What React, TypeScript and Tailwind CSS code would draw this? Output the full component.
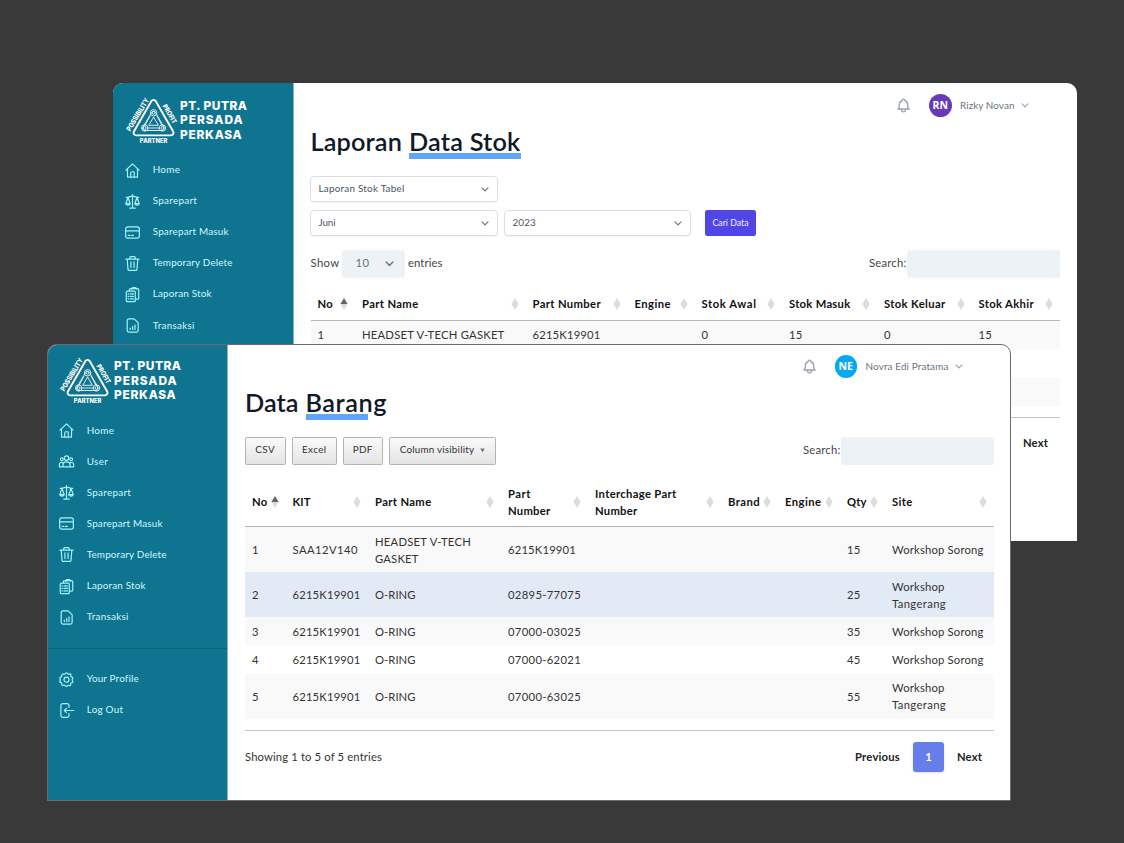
import { useLayoutEffect, useRef, useState, type ReactNode } from "react";

/* Text run whose letter spacing is adjusted so that it fills a given width. */
function Fit({ w, children, className = "" }: { w: number; children: string; className?: string }) {
  const ref = useRef<HTMLSpanElement>(null);
  const [spacing, setSpacing] = useState<number | null>(null);
  useLayoutEffect(() => {
    const el = ref.current;
    if (!el) return;
    el.style.letterSpacing = "0px";
    const natural = el.getBoundingClientRect().width;
    const next = (w - natural) / children.length;
    el.style.letterSpacing = `${next}px`;
    setSpacing(next);
  }, [w, children]);
  return (
    <span ref={ref} className={`inline-block whitespace-pre ${className}`} style={{ letterSpacing: `${spacing ?? 0}px` }}>
      {children}
    </span>
  );
}

type IconName = "home" | "users" | "scale" | "card" | "trash" | "clipboard" | "report" | "gear" | "logout";

const shapes: Record<IconName, ReactNode> = {
  home: (
    <>
      <path d="M1.500 11.500 12 1.500l10.500 10M4 9.500V22.500h16V9.500" />
      <path d="M9.200 22v-6.500a1.500 1.500 0 0 1 1.500-1.500h2.600a1.500 1.500 0 0 1 1.500 1.500V22" />
    </>
  ),
  users: (
    <>
      <circle cx="12" cy="6.500" r="3.600" />
      <circle cx="4.500" cy="8.500" r="2.300" />
      <circle cx="19.500" cy="8.500" r="2.300" />
      <path d="M6.500 20.500v-3.500a5.500 4.500 0 0 1 11 0v3.500zM6.500 20.500H.5v-3.500a3.500 3.500 0 0 1 6-2.500M17.500 20.500h6v-3.500a3.500 3.500 0 0 0-6-2.500" />
    </>
  ),
  scale: (
    <>
      <path d="M12 1v21M7.500 22.500h9M2 5.500c4 0 6-2 10-2s6 2 10 2" />
      <path d="M4.800 5.500 1.200 15.500c1 3 6.200 3 7.200 0zM19.200 5.500l-3.600 10c1 3 6.200 3 7.200 0zM1.200 15.500h7.200M15.600 15.500h7.200" />
    </>
  ),
  card: (
    <>
      <rect x="1" y="3" width="22" height="18" rx="3.500" />
      <path d="M1 9.500h22M5 16.500h3M10.500 16.500h3" />
    </>
  ),
  trash: (
    <>
      <path d="M1.500 5h21M3.500 5l1.300 16a2 2 0 0 0 2 2h10.400a2 2 0 0 0 2-2L20.500 5M7.500 5V3a2 2 0 0 1 2-2h5a2 2 0 0 1 2 2v2" />
      <path d="M9.500 9.500v9M14.500 9.500v9" />
    </>
  ),
  clipboard: (
    <>
      <rect x="2" y="6.500" width="14.500" height="17" rx="2" />
      <path d="M7 6V4.500a2 2 0 0 1 2-2h11a2 2 0 0 1 2 2v13a2 2 0 0 1-2 2h-3M11 4V2.500A1.500 1.500 0 0 1 12.500 1h4A1.500 1.500 0 0 1 18 2.500V4" />
      <path d="M5 11h1M8.500 11h5M5 15h1M8.500 15h5M5 19h1M8.500 19h5" />
    </>
  ),
  report: (
    <>
      <path d="M6 1.500h8.500L21 7.500V20a2.500 2.500 0 0 1-2.500 2.500H6A2.500 2.500 0 0 1 3.500 20V4A2.500 2.500 0 0 1 6 1.500z" />
      <path d="M8.500 18.500v-2.500M12.300 18.500v-5M16 18.500V11" />
    </>
  ),
  gear: (
    <>
      <path d="M12 1.200c1.500 0 1.700 2 2.700 2.400s2.600-1.300 3.800-.3.100 2.700.6 3.700 2.700.9 3.100 2.300-1.300 2.200-1.300 3.200 1.700 1.900 1.200 3.400-2.500 1.200-3.200 2.100.3 2.800-1 3.600-2.500-.7-3.600-.4-1.300 1.900-2.800 1.900-1.700-1.700-2.700-2-2.500 1.100-3.700.3-.2-2.700-.8-3.600-2.700-.8-3.100-2.200 1.200-2.100 1.200-3.100S.8 10.700 1.200 9.300s2.500-1.300 3.100-2.200-.4-2.800.8-3.700 2.600.7 3.700.3 1.700-2.500 3.200-2.500z" />
      <circle cx="12" cy="12.200" r="4" />
    </>
  ),
  logout: (
    <>
      <path d="M16 7V4a3 3 0 0 0-3-3H6a3 3 0 0 0-3 3v16a3 3 0 0 0 3 3h7a3 3 0 0 0 3-3v-3" />
      <path d="M23.500 12H8.500M12 8.500 8.500 12l3.500 3.500" />
    </>
  ),
};

function NavIcon({ name }: { name: IconName }) {
  return (
    <svg viewBox="0 0 24 24" className="h-[15px] w-[15px] shrink-0 overflow-visible" fill="none" stroke="#a5f3fc" strokeWidth="1.900" strokeLinecap="round" strokeLinejoin="round">
      {shapes[name]}
    </svg>
  );
}

function NavItem({ icon, label, w }: { icon: IconName; label: string; w: number }) {
  return (
    <li className="flex h-[31.1px] items-center gap-[12.800px] pl-[11.900px] text-[9.9px] text-cyan-100">
      <NavIcon name={icon} />
      <Fit w={w} className="pb-[1px]">{label}</Fit>
    </li>
  );
}

const knot = "M24.600 15.500a2.300 2.300 0 0 1 4 0L36.800 30a2.300 2.300 0 0 1-2 3.500H18a2.300 2.300 0 0 1-2-3.500z";

function Brand() {
  return (
    <div className="flex h-[48px] items-center gap-[3.500px] pl-[13.500px]">
      <svg viewBox="0 0 50 48" className="h-[48px] w-[50px] overflow-visible" fill="none" stroke="#fff">
        <path d="M24.300 4.200a2.600 2.600 0 0 1 4.500 0L46.200 34.500a2.600 2.600 0 0 1-2.300 3.900H9.200a2.600 2.600 0 0 1-2.300-3.900z" strokeWidth="1.900" />
        <g strokeWidth=".85">
          <path d={knot} />
          <path d="M23 19 18 28.500M30 19l5 9.500M20.500 31h12" />
          <circle cx="26.600" cy="15.800" r="3.200" />
          <circle cx="26.600" cy="15.800" r="1.400" />
          <circle cx="17.700" cy="31" r="3.200" />
          <circle cx="17.700" cy="31" r="1.400" />
          <circle cx="35.500" cy="31" r="3.200" />
          <circle cx="35.500" cy="31" r="1.400" />
          <path d="m26.600 20 4.800 8.300h-9.600z" />
        </g>
        <g fill="#fff" stroke="none" fontFamily="Inter, sans-serif" fontWeight="800" textAnchor="middle">
          <text transform="translate(12.800 18.800) rotate(-59)" fontSize="7" textLength="37" lengthAdjust="spacingAndGlyphs">POSSIBILITY</text>
          <text transform="translate(40.600 18.100) rotate(60)" fontSize="6.800" textLength="21" lengthAdjust="spacingAndGlyphs">PROFIT</text>
          <text x="26.600" y="45.600" fontSize="5.700" textLength="27.500" lengthAdjust="spacingAndGlyphs">PARTNER</text>
        </g>
      </svg>
      <div className="flex flex-col items-start font-[Inter] text-[11.900px] leading-[14.500px] font-extrabold text-white">
        <Fit w={67.5}>PT. PUTRA</Fit>
        <Fit w={63.5}>PERSADA</Fit>
        <Fit w={62.5}>PERKASA</Fit>
      </div>
    </div>
  );
}

function Chevron({ className }: { className: string }) {
  return (
    <svg viewBox="0 0 8 5" className={className} fill="none" stroke="currentColor" strokeWidth="1.200" strokeLinecap="round" strokeLinejoin="round">
      <path d="m1 .8 3 3 3-3" />
    </svg>
  );
}

function TopBar({ initials, name, w, color, height }: { initials: string; name: string; w: number; color: string; height: string }) {
  return (
    <div className={`flex items-center justify-end ${height}`}>
      <svg viewBox="0 0 24 24" className="h-[17px] w-[17px] text-[#9ca3af]" fill="none" stroke="currentColor" strokeWidth="1.900" strokeLinecap="round" strokeLinejoin="round">
        <path d="M15 17h5l-1.400-1.400A2 2 0 0 1 18 14.200V11a6 6 0 0 0-4-5.700V5a2 2 0 1 0-4 0v.3A6 6 0 0 0 6 11v3.200c0 .5-.2 1-.6 1.400L4 17h5m6 0v1a3 3 0 1 1-6 0v-1m6 0H9" />
      </svg>
      <span className={`ml-[17px] flex h-[22.500px] w-[22.500px] items-center justify-center rounded-full font-['Open_Sans'] text-[10.500px] font-bold text-white ${color}`}>
        {initials}
      </span>
      <span className="ml-[8.500px] flex items-center pb-[1px] text-[9.900px] text-[#6b7280]">
        <Fit w={w}>{name}</Fit>
      </span>
      <Chevron className="ml-[6px] h-[5px] w-[8px] text-[#9ca3af]" />
    </div>
  );
}

function SortIcon({ active }: { active?: boolean }) {
  return (
    <svg viewBox="0 0 8 12" className="mr-[7px] h-[12px] w-[8px] shrink-0">
      <path d="M.4 6 4 0l3.600 6z" fill={active ? "#666" : "#dcdcdc"} />
      <path d="M.4 6 4 12l3.600-6z" fill="#dcdcdc" />
    </svg>
  );
}

type Column = { lines: [string, number][]; width: string };

function HeaderRow({ columns, height }: { columns: Column[]; height: string }) {
  return (
    <div className={`flex border-b border-[#b5b5b5] ${height}`}>
      {columns.map((c, i) => (
        <div key={i} className={`flex shrink-0 items-center justify-between pl-[7px] ${c.width}`}>
          <div className="flex flex-col items-start text-[11.250px] leading-[17px] font-bold text-[#111]">
            {c.lines.map(([t, w]) => (
              <Fit key={t} w={w}>{t}</Fit>
            ))}
          </div>
          <SortIcon active={i === 0} />
        </div>
      ))}
    </div>
  );
}

function BodyRow({ columns, cells, className }: { columns: Column[]; cells: [string, number][][]; className: string }) {
  return (
    <div className={`flex text-[11.250px] leading-[17px] text-[#333] ${className}`}>
      {columns.map((c, i) => (
        <div key={i} className={`flex shrink-0 flex-col justify-center pl-[7px] ${c.width}`}>
          {(cells[i] ?? []).map(([t, w]) => (
            <Fit key={t} w={w} className="self-start">{t}</Fit>
          ))}
        </div>
      ))}
    </div>
  );
}

function Select({ label, w, className }: { label: string; w: number; className: string }) {
  return (
    <div className={`flex h-[26px] items-center justify-between rounded-[4px] border border-[#dcdee2] bg-white pr-[8px] pl-[7.500px] text-[9.900px] text-[#4b5563] shadow-[0_1px_1px_rgba(0,0,0,0.05)] ${className}`}>
      <Fit w={w} className="pb-[2px]">{label}</Fit>
      <Chevron className="h-[5px] w-[8px] text-[#6b7280]" />
    </div>
  );
}

function Search() {
  return (
    <div className="flex items-center text-[11.250px] text-[#444]">
      <Fit w={37.5}>Search:</Fit>
      <div className="h-[28px] w-[153.500px] rounded-[3px] bg-[#edf2f7]" />
    </div>
  );
}

function ToolButton({ label, w, className, caret }: { label: string; w: number; className: string; caret?: boolean }) {
  return (
    <div className={`flex h-[28px] items-center justify-center rounded-[1.500px] border border-[#b3b3b3] bg-linear-to-b from-[#fafafa] to-[#e4e4e4] text-[9.900px] text-[#333] ${className}`}>
      <Fit w={w} className="pb-[2px]">{label}</Fit>
      {caret && (
        <svg viewBox="0 0 6 5" className="ml-[6px] h-[5px] w-[5px]">
          <path d="M.3 0h5.400L3 5z" fill="#777" />
        </svg>
      )}
    </div>
  );
}

const stokColumns: Column[] = [
  { lines: [["No", 15.5]], width: "w-[44.500px]" },
  { lines: [["Part Name", 56.5]], width: "w-[170.500px]" },
  { lines: [["Part Number", 68.500]], width: "w-[102px]" },
  { lines: [["Engine", 36.500]], width: "w-[67px]" },
  { lines: [["Stok Awal", 55]], width: "w-[87.500px]" },
  { lines: [["Stok Masuk", 61.500]], width: "w-[95px]" },
  { lines: [["Stok Keluar", 61.500]], width: "w-[94.500px]" },
  { lines: [["Stok Akhir", 55.500]], width: "w-[88.500px]" },
];

const barangColumns: Column[] = [
  { lines: [["No", 15.5]], width: "w-[40.500px]" },
  { lines: [["KIT", 18]], width: "w-[82.500px]" },
  { lines: [["Part Name", 56.5]], width: "w-[133px]" },
  { lines: [["Part", 23], ["Number", 42.500]], width: "w-[87px]" },
  { lines: [["Interchage Part", 81.500], ["Number", 42.500]], width: "w-[133px]" },
  { lines: [["Brand", 32]], width: "w-[57px]" },
  { lines: [["Engine", 36.500]], width: "w-[62px]" },
  { lines: [["Qty", 19.500]], width: "w-[45px]" },
  { lines: [["Site", 20.500]], width: "w-[109px]" },
];

const sorong: [string, number][] = [["Workshop Sorong", 91.500]];
const tangerang: [string, number][] = [["Workshop", 52.500], ["Tangerang", 54]];
const oring: [string, number][] = [["O-RING", 40.500]];
const kit: [string, number][] = [["6215K19901", 68]];

function LaporanWindow() {
  return (
    <section className="absolute top-[83px] left-[113px] flex h-[458px] w-[964px] overflow-hidden rounded-t-[10px] bg-white">
      <aside className="w-[180.500px] shrink-0 border-r border-[#8ab5c1] bg-[#0f7490] pt-[13.500px]">
        <Brand />
        <ul className="mt-[10px]">
          <NavItem icon="home" label="Home" w={27.5} />
          <NavItem icon="scale" label="Sparepart" w={44.5} />
          <NavItem icon="card" label="Sparepart Masuk" w={76} />
          <NavItem icon="trash" label="Temporary Delete" w={80} />
          <NavItem icon="clipboard" label="Laporan Stok" w={59} />
          <NavItem icon="report" label="Transaksi" w={42} />
        </ul>
      </aside>
      <main className="flex flex-1 flex-col px-[17px]">
        <div className="pr-[31.500px]">
          <TopBar initials="RN" name="Rizky Novan" w={54.5} color="bg-[#673ab7]" height="h-[45px]" />
        </div>
        <h1 className="flex h-[28px] items-center gap-[7px] pb-[3px] text-[25.300px] leading-[28px] font-semibold text-[#111827]">
          <Fit w={91.5}>Laporan</Fit>
          <span className="relative">
            <span className="absolute inset-x-0 top-[26.500px] h-[5.500px] bg-[#60a5fa]" />
            <Fit w={111.5} className="relative">Data Stok</Fit>
          </span>
        </h1>
        <div className="mt-[20px] -ml-[0.500px] flex">
          <Select label="Laporan Stok Tabel" w={86} className="w-[188px]" />
        </div>
        <div className="mt-[8px] -ml-[0.500px] flex">
          <Select label="Juni" w={17} className="w-[188px]" />
          <Select label="2023" w={23.5} className="ml-[6px] w-[187px]" />
          <div className="ml-[14px] flex h-[26px] w-[51px] items-center justify-center rounded-[2.500px] bg-[#4f46e5] text-[8.700px] text-indigo-50">
            <Fit w={36}>Cari Data</Fit>
          </div>
        </div>
        <div className="mt-[13.500px] flex items-center justify-between text-[11.250px] text-[#444]">
          <div className="flex items-center">
            <Fit w={29}>Show</Fit>
            <div className="mr-[3.500px] ml-[2.500px] flex h-[28px] w-[62.500px] items-center justify-between rounded-[3px] bg-[#edf2f7] pr-[11px] pl-[13.500px] text-[#6b7280]">
              <Fit w={14}>10</Fit>
              <Chevron className="h-[6px] w-[9px]" />
            </div>
            <Fit w={34.5}>entries</Fit>
          </div>
          <Search />
        </div>
        <div className="mt-[10px]">
          <HeaderRow columns={stokColumns} height="h-[33.500px]" />
          <BodyRow
            columns={stokColumns}
            cells={[[["1", 6.5]], [["HEADSET V-TECH GASKET", 142.5]], [["6215K19901", 68]], [], [["0", 7]], [["15", 13.5]], [["0", 7]], [["15", 13.5]]]}
            className="h-[28px] bg-[#f9f9f9] pb-[2px]"
          />
          <div className="h-[28.500px]" />
          <div className="h-[28px] bg-[#f9f9f9]" />
          <div className="mt-[11px] border-t border-[#c4c4c4]" />
        </div>
        <div className="mt-[17.500px] flex justify-end pr-[12px] text-[11.250px] font-bold text-[#222]">
          <Fit w={25}>Next</Fit>
        </div>
      </main>
    </section>
  );
}

function BarangWindow() {
  return (
    <section className="absolute top-[344px] left-[47px] flex h-[457px] w-[964px] overflow-hidden rounded-t-[10px] border border-[#6b6b6b] bg-white">
      <aside className="w-[180px] shrink-0 border-r border-[#8ab5c1] bg-[#0f7490] pt-[12px]">
        <div className="-ml-px">
          <Brand />
          <ul className="mt-[10px]">
            <NavItem icon="home" label="Home" w={27.5} />
            <NavItem icon="users" label="User" w={21.5} />
            <NavItem icon="scale" label="Sparepart" w={44.5} />
            <NavItem icon="card" label="Sparepart Masuk" w={76} />
            <NavItem icon="trash" label="Temporary Delete" w={80} />
            <NavItem icon="clipboard" label="Laporan Stok" w={59} />
            <NavItem icon="report" label="Transaksi" w={42} />
          </ul>
          <ul className="mt-[15px] border-t border-[#0d6179] pt-[15px]">
            <NavItem icon="gear" label="Your Profile" w={52} />
            <NavItem icon="logout" label="Log Out" w={36.500} />
          </ul>
        </div>
      </aside>
      <main className="flex flex-1 flex-col pr-[16px] pl-[17px]">
        <div className="pr-[31.500px]">
          <TopBar initials="NE" name="Novra Edi Pratama" w={83} color="bg-[#03a9f4]" height="h-[43px]" />
        </div>
        <h1 className="flex h-[28px] items-center gap-[7px] text-[25.300px] leading-[28px] font-semibold text-[#111827]">
          <Fit w={53.5}>Data</Fit>
          <span className="relative">
            <span className="absolute top-[26px] left-0 h-[5.500px] w-[62.500px] bg-[#60a5fa]" />
            <Fit w={81.5} className="relative">Barang</Fit>
          </span>
        </h1>
        <div className="mt-[20.500px] -ml-[0.500px] flex items-center justify-between">
          <div className="flex gap-[6px]">
            <ToolButton label="CSV" w={20} className="w-[41.500px]" />
            <ToolButton label="Excel" w={24.500} className="w-[44.500px]" />
            <ToolButton label="PDF" w={20} className="w-[40.500px]" />
            <ToolButton label="Column visibility" w={74.500} className="w-[107px]" caret />
          </div>
          <Search />
        </div>
        <div className="mt-[12.500px]">
          <HeaderRow columns={barangColumns} height="h-[50px]" />
          <BodyRow columns={barangColumns} cells={[[["1", 6.500]], [["SAA12V140", 65.500]], [["HEADSET V-TECH", 96], ["GASKET", 43.500]], kit, [], [], [], [["15", 13.500]], sorong]} className="h-[45px] bg-[#f9f9f9]" />
          <BodyRow columns={barangColumns} cells={[[["2", 6.500]], kit, oring, [["02895-77075", 73]], [], [], [], [["25", 13.500]], tangerang]} className="h-[45px] bg-[#e2eaf6]" />
          <BodyRow columns={barangColumns} cells={[[["3", 6.500]], kit, oring, [["07000-03025", 73]], [], [], [], [["35", 13.500]], sorong]} className="h-[28.250px] bg-[#f9f9f9]" />
          <BodyRow columns={barangColumns} cells={[[["4", 6.500]], kit, oring, [["07000-62021", 73]], [], [], [], [["45", 13.500]], sorong]} className="h-[28.250px]" />
          <BodyRow columns={barangColumns} cells={[[["5", 6.500]], kit, oring, [["07000-63025", 73]], [], [], [], [["55", 13.500]], tangerang]} className="h-[45px] bg-[#f9f9f9]" />
        </div>
        <div className="mt-[11.500px] flex justify-between border-t border-[#c4c4c4] pt-[11px] text-[11.250px]">
          <div className="flex h-[30px] items-center text-[#333]">
            <Fit w={137}>Showing 1 to 5 of 5 entries</Fit>
          </div>
          <div className="flex h-[30px] items-center pr-[12px] font-bold text-[#222]">
            <Fit w={45}>Previous</Fit>
            <span className="mx-[13px] flex h-[30px] w-[31px] items-center justify-center rounded-[3px] bg-[#667eea] text-white shadow-sm">1</span>
            <Fit w={25}>Next</Fit>
          </div>
        </div>
      </main>
    </section>
  );
}

export default function App() {
  return (
    <div className="relative h-[843px] w-[1124px] overflow-hidden bg-[#393939] font-[Lato,sans-serif]">
      <LaporanWindow />
      <BarangWindow />
    </div>
  );
}
